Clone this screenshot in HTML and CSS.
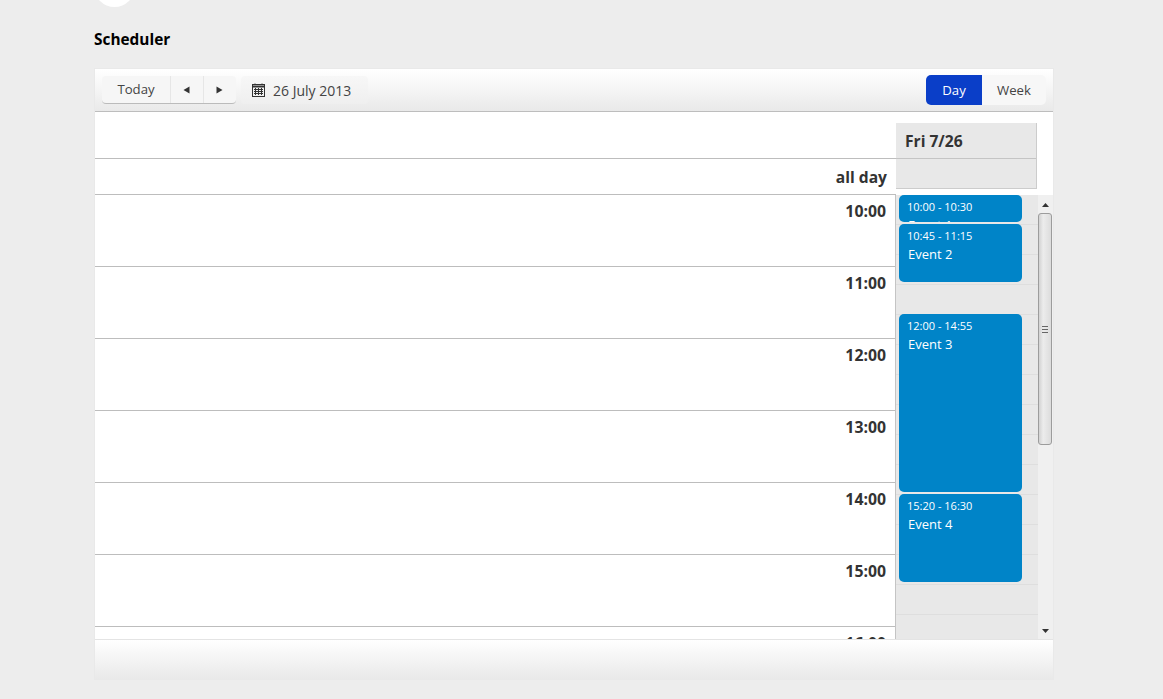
FILE: index.html
```html
<!DOCTYPE html>
<html lang="en">
<head>
<meta charset="utf-8">
<title>Scheduler</title>
<link rel="stylesheet" href="styles.css">
</head>
<body>
<div class="page">
  <div class="avatar"></div>
  <h1 class="title">Scheduler</h1>
  <div class="scheduler">
    <div class="toolbar">
      <div class="btn-group">
        <button class="btn btn-today">Today</button>
        <button class="btn btn-nav"><svg width="7" height="8" viewBox="0 0 7 8"><path d="M6.5 0.5V7.5L0.5 4Z" fill="#333"/></svg></button>
        <button class="btn btn-nav"><svg width="7" height="8" viewBox="0 0 7 8"><path d="M0.5 0.5V7.5L6.5 4Z" fill="#333"/></svg></button>
      </div>
      <div class="date">
        <svg class="cal" width="13" height="14" viewBox="0 0 13 14"><path d="M3 0.5V2M10 0.5V2" stroke="#333" fill="none"/><rect x="0.5" y="1.5" width="12" height="12" fill="none" stroke="#333"/><path d="M0.5 3.5H12.5" stroke="#333" stroke-width="2" fill="none"/><path d="M2 6.5H11M2 8.5H11M2 10.5H11M3.5 5V12M6.5 5V12M9.5 5V12" stroke="#333" fill="none"/></svg>
        <span>26 July 2013</span>
      </div>
      <div class="views">
        <button class="view view-active">Day</button>
        <button class="view">Week</button>
      </div>
    </div>
    <div class="table">
      <div class="head-row">
        <div class="head-left">
          <div class="corner"></div>
          <div class="allday">all day</div>
        </div>
        <div class="head-right">
          <div class="day-name">Fri 7/26</div>
          <div class="day-allday"></div>
        </div>
      </div>
      <div class="body-row">
        <div class="times">
          <div class="time">10:00</div>
          <div class="time">11:00</div>
          <div class="time">12:00</div>
          <div class="time">13:00</div>
          <div class="time">14:00</div>
          <div class="time">15:00</div>
          <div class="time">16:00</div>
        </div>
        <div class="content">
          <div class="slots">
            <div class="slot"></div><div class="slot"></div><div class="slot"></div><div class="slot"></div>
            <div class="slot"></div><div class="slot"></div><div class="slot"></div><div class="slot"></div>
            <div class="slot"></div><div class="slot"></div><div class="slot"></div><div class="slot"></div>
            <div class="slot"></div><div class="slot"></div><div class="slot slot-major"></div>
          </div>
          <div class="event event-1"><div class="event-time">10:00 - 10:30</div><div class="event-name">Event 1</div></div>
          <div class="event event-2"><div class="event-time">10:45 - 11:15</div><div class="event-name">Event 2</div></div>
          <div class="event event-3"><div class="event-time">12:00 - 14:55</div><div class="event-name">Event 3</div></div>
          <div class="event event-4"><div class="event-time">15:20 - 16:30</div><div class="event-name">Event 4</div></div>
        </div>
        <div class="scrollbar">
          <svg class="arrow" width="7" height="4" viewBox="0 0 7 4"><path d="M3.5 0L7 4H0Z" fill="#333"/></svg>
          <div class="track"><div class="thumb"><span class="grip"></span></div></div>
          <svg class="arrow" width="7" height="4" viewBox="0 0 7 4"><path d="M0 0H7L3.5 4Z" fill="#333"/></svg>
        </div>
      </div>
    </div>
    <div class="footer"></div>
  </div>
</div>
</body>
</html>
```
FILE: styles.css
```css
* { box-sizing: border-box; }
html, body { margin: 0; height: 100%; overflow: hidden; }
body {
  background: #ededed;
  font-family: "Open Sans", "Noto Sans", sans-serif;
  color: #333;
}
.page { padding-left: 94px; width: 1054px; }
.avatar {
  width: 41px;
  height: 41px;
  margin-top: -34px;
  border-radius: 50%;
  background: #fff;
}
.title {
  margin: 23px 0 0;
  height: 22px;
  font-size: 15.4px;
  line-height: 19px;
  font-weight: 700;
  color: #000;
}
.scheduler {
  margin: 17px 0 0 1px;
  width: 958px;
  height: 610px;
  background: #fff;
  display: flex;
  flex-direction: column;
  box-shadow: 0 0 0 1px #e9e9e9;
}
.toolbar {
  height: 43px;
  flex: none;
  display: flex;
  align-items: flex-start;
  padding: 7px 7px 0;
  background: linear-gradient(#ffffff, #f7f7f7 40%, #e9e9e9);
  border-bottom: 1px solid #bdbdbd;
}
button {
  font-family: inherit;
  border: 0;
  padding: 0;
  margin: 0;
  color: #444;
  background: none;
}
.btn-group {
  display: flex;
  height: 28px;
  background: #f6f6f6;
  border-radius: 4px;
  border-bottom: 1px solid #bbb;
}
.btn { height: 27px; font-size: 13.2px; line-height: 27px; display: flex; align-items: center; justify-content: center; }
.btn-today { width: 68px; }
.btn-nav { width: 33px; padding-right: 2px; border-left: 1px solid #e6e6e6; }
.date {
  margin-left: 5px;
  width: 127px;
  height: 28px;
  display: flex;
  align-items: center;
  padding-left: 11px;
  gap: 8px;
  font-size: 14px;
  color: #444;
  background: linear-gradient(#f7f7f7, #efefef);
  border-radius: 4px;
}
.cal { flex: none; }
.views {
  margin: -1px 0 0 auto;
  display: flex;
  height: 30px;
  border-radius: 5px;
  background: #f7f7f7;
  overflow: hidden;
}
.view { width: 64px; height: 30px; font-size: 13.2px; line-height: 30px; }
.view-active { width: 56px; background: #0a3ec8; color: #fff; }
.table { flex: 1; min-height: 0; display: flex; flex-direction: column; }
.head-row { display: flex; flex: none; height: 83px; }
.head-left { width: 801px; flex: none; }
.corner { height: 47px; border-bottom: 1px solid #bdbdbd; }
.allday {
  height: 36px;
  padding-right: 9px;
  text-align: right;
  font-size: 15.6px;
  font-weight: 700;
  line-height: 37px;
  border-bottom: 1px solid #bdbdbd;
}
.head-right { width: 141px; margin-top: 11px; height: 66px; flex: none; background: #e8e8e8; border-right: 1px solid #ccc; }
.day-name {
  height: 36px;
  padding-left: 9px;
  font-size: 15.6px;
  font-weight: 700;
  line-height: 37px;
  border-bottom: 1px solid #c4c4c4;
}
.day-allday { height: 30px; border-bottom: 1px solid #ccc; }
.body-row { flex: 1; min-height: 0; display: flex; overflow: hidden; }
.times { width: 801px; flex: none; border-right: 1px solid #c4c4c4; }
.time {
  height: 72px;
  padding-right: 9px;
  text-align: right;
  font-size: 15.8px;
  font-weight: 700;
  line-height: 20px;
  padding-top: 6px;
  border-bottom: 1px solid #bdbdbd;
}
.content { width: 142px; flex: none; position: relative; background: #e8e8e8; overflow: hidden; }
.slots { width: 100%; }
.slot { height: 30px; border-bottom: 1px solid #dedede; }
.slot-major { border-bottom-color: #c2c2c2; }
.event {
  position: absolute;
  left: 3px;
  width: 123px;
  padding: 4px 9px 0;
  background: #0084c8;
  color: #fff;
  border-radius: 5px;
  overflow: hidden;
}
.event-time { font-size: 11px; line-height: 16px; margin-left: -1px; }
.event-name { font-size: 13px; line-height: 20px; }
.event-1 { top: 0; height: 27px; }
.event-2 { top: 29px; height: 58px; }
.event-3 { top: 119px; height: 178px; }
.event-4 { top: 299px; height: 88px; }
.scrollbar {
  width: 15px;
  flex: none;
  background: #f0f0f0;
  display: flex;
  flex-direction: column;
  align-items: center;
  padding-top: 8px;
}
.arrow { flex: none; }
.track { flex: 1; width: 100%; padding-top: 6px; }
.thumb {
  width: 14px;
  height: 232px;
  background: linear-gradient(90deg, #d2d2d2, #ececec 35%, #dcdcdc);
  border: 1px solid #9c9c9c;
  border-radius: 3px;
  display: flex;
  align-items: center;
  justify-content: center;
}
.grip {
  width: 6px;
  height: 7px;
  border-top: 1px solid #666;
  border-bottom: 1px solid #666;
  background: linear-gradient(#666, #666) center / 100% 1px no-repeat;
}
.scrollbar .arrow:last-child { margin-bottom: 6px; }
.footer {
  flex: none;
  height: 40px;
  background: linear-gradient(#ffffff, #f6f6f6 40%, #e9e9e9);
  border-top: 1px solid #e4e4e4;
}
```
